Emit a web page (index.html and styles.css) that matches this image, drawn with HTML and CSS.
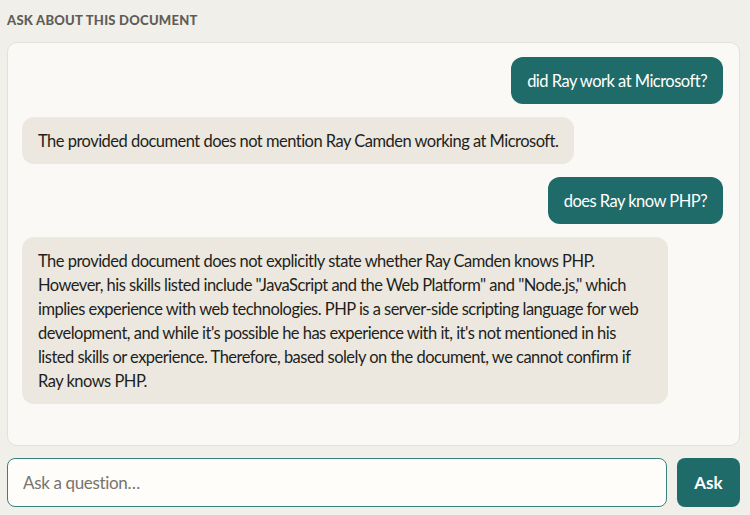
FILE: index.html
```html
<!DOCTYPE html>
<html lang="en">
<head>
    <meta charset="UTF-8">
    <meta name="viewport" content="width=device-width, initial-scale=1.0">
    <title>Ask about this document</title>
<link rel="stylesheet" href="styles.css">
</head>
<body>
    <div class="ask-panel">
        <h2 class="panel-title">Ask about this document</h2>

        <div class="chat-log">
            <div class="msg msg-user">did Ray work at Microsoft?</div>
            <div class="msg msg-bot">The provided document does not mention Ray Camden working at Microsoft.</div>
            <div class="msg msg-user">does Ray know PHP?</div>
            <div class="msg msg-bot">The provided document does not explicitly state whether Ray Camden knows PHP. However, his skills listed include "JavaScript and the Web Platform" and "Node.js," which implies experience with web technologies. PHP is a server-side scripting language for web development, and while it's possible he has experience with it, it's not mentioned in his listed skills or experience. Therefore, based solely on the document, we cannot confirm if Ray knows PHP.</div>
        </div>

        <form class="ask-form" id="askForm">
            <input type="text" class="ask-input" placeholder="Ask a question…">
            <button type="submit" class="ask-btn">Ask</button>
        </form>
    </div>
</body>
</html>
```

FILE: styles.css
```css
:root {
    --teal: #1f6b6a;
    --page: #f1efe9;
    --card: #faf9f5;
    --bubble: #ece8df;
    --border: #e4e1da;
    --text: #1f1f1c;
}

* {
    margin: 0;
    padding: 0;
    box-sizing: border-box;
}

body {
    font-family: Lato, "Open Sans", sans-serif;
    background-color: var(--page);
    color: var(--text);
}

.ask-panel {
    padding: 12px 10px 8px 7px;
}

.panel-title {
    font-size: 13px;
    font-weight: 900;
    letter-spacing: 0.02em;
    text-transform: uppercase;
    color: #5f5d58;
    line-height: 16px;
    margin-bottom: 14px;
}

/* Chat log */
.chat-log {
    display: flex;
    flex-direction: column;
    align-items: flex-start;
    gap: 13px;
    height: 404px;
    padding: 14px 16px 15px 14px;
    background-color: var(--card);
    border: 1px solid var(--border);
    border-radius: 10px;
}

.msg {
    font-size: 16.5px;
    line-height: 24px;
    letter-spacing: -0.52px;
    padding: 11.5px 16px;
    border-radius: 12px;
    max-width: 646px;
}

.msg-user {
    align-self: flex-end;
    background-color: var(--teal);
    color: #fff;
}

.msg-bot {
    background-color: var(--bubble);
}

/* Input row */
.ask-form {
    display: flex;
    gap: 10px;
    margin-top: 12px;
}

.ask-input {
    flex: 1;
    height: 49px;
    padding: 0 15px;
    font-family: inherit;
    font-size: 17px;
    letter-spacing: -0.35px;
    color: var(--text);
    background-color: #fefdf9;
    border: 1px solid #3b7f7e;
    border-radius: 8px;
    outline: none;
}

.ask-input::placeholder {
    color: #77746e;
}

.ask-btn {
    width: 63px;
    height: 49px;
    font-family: inherit;
    font-size: 17px;
    font-weight: 700;
    color: #fff;
    background-color: var(--teal);
    border: none;
    border-radius: 8px;
    cursor: pointer;
}
```
